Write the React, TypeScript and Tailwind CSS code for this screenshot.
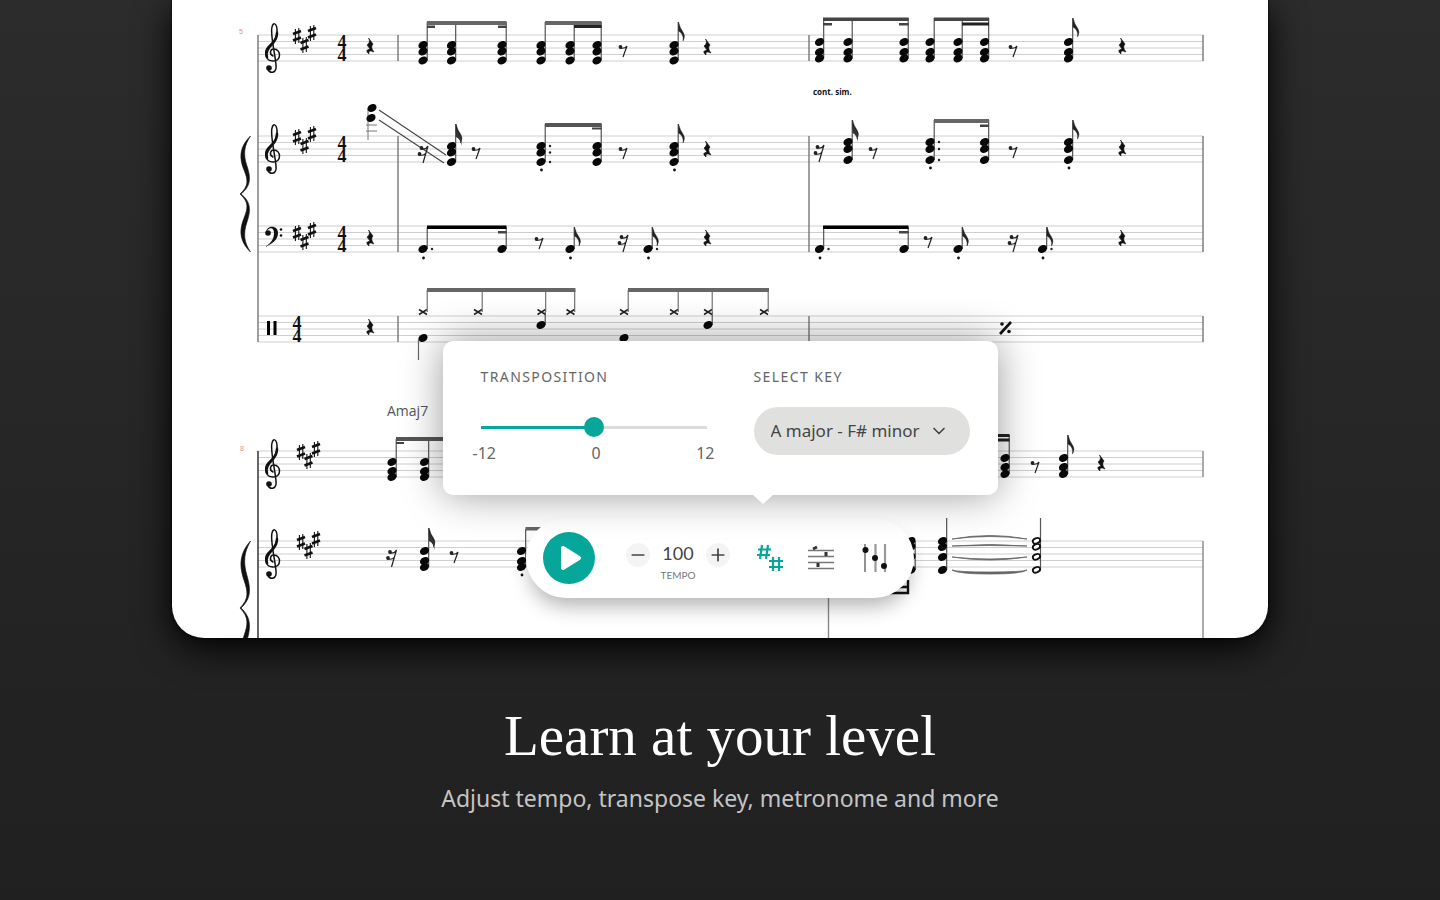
import React, { useState } from 'react';
import { ChevronDown, Minus, Plus } from 'lucide-react';

const KEYS = ['A major - F# minor', 'D major - B minor', 'G major - E minor', 'C major - A minor'];

// Y of the top line of every staff
const STAVES = [35, 136, 226, 316, 451, 541];

type Point = { x: number; y: number };

const Staff = ({ y }: { y: number }) => (
  <path
    d={[0, 6.5, 13, 19.5, 26].map((dy) => `M258 ${y + dy}H1203`).join('')}
    stroke="#cfcfcf"
    strokeWidth="1.1"
  />
);

const TrebleClef = ({ y }: { y: number }) => (
  <g transform={`translate(273 ${y})`} fill="none" stroke="#111" strokeLinecap="round">
    <path
      d="M0 21C-4 19-3 14 1 14C8 14 9 26 0 26C-8 26-9 17-5 12C0 7 5 3 4-6C3-13 0-12-1-8C-3-1 2 18 3 30C4 39-4 39-5 34"
      strokeWidth="1.5"
    />
    <path d="M-6 22C-8 17-5 13-1 9C2 6 4 3 4-2" strokeWidth="2.6" />
    <circle cx="-4" cy="33" r="2.8" fill="#111" stroke="none" />
  </g>
);

const BassClef = ({ y }: { y: number }) => (
  <g transform={`translate(265 ${y})`} fill="#111">
    <circle cx="3" cy="7" r="2.8" />
    <path d="M1 6C2-1 13-1 13 7C13 14 7 18 0 21C6 17 9 13 9 7C9 1 4 1 1 6Z" />
    <circle cx="16" cy="3.5" r="1.3" />
    <circle cx="16" cy="9.5" r="1.3" />
  </g>
);

const Sharp = ({ x, y }: Point) => (
  <g transform={`translate(${x} ${y})`} stroke="#111">
    <path d="M-1.6-7V8M1.8-8V7" strokeWidth="1.1" />
    <path d="M-4-2L4-5M-4 4.5L4 1.5" strokeWidth="2.8" />
  </g>
);

const KeySignature = ({ x, y }: Point) => (
  <>
    <Sharp x={x} y={y} />
    <Sharp x={x + 7.5} y={y + 9} />
    <Sharp x={x + 15} y={y - 3} />
  </>
);

const TimeSignature = ({ x, y }: Point) => (
  <g fill="#111" className="font-['Liberation_Serif',serif] text-[18px] font-bold" textAnchor="middle">
    <text x={x} y={y + 13}>4</text>
    <text x={x} y={y + 26}>4</text>
  </g>
);

const QuarterRest = ({ x, y }: Point) => (
  <g transform={`translate(${x} ${y})`}>
    <path d="M-1.5 3L3 9Q0 12 4 17Q-2 14-1 19Q-6 15 0 14L-3 10Q1 7-1.5 3Z" fill="#111" stroke="#111" strokeWidth=".6" />
  </g>
);

const EighthRest = ({ x, y }: Point) => (
  <g transform={`translate(${x} ${y})`}>
    <circle cx="-2.5" cy="12" r="1.9" fill="#222" />
    <path d="M-3 13Q2 14 4 11L0 22" fill="none" stroke="#222" strokeWidth="1.2" />
  </g>
);

const SixteenthRest = ({ x, y }: Point) => (
  <g transform={`translate(${x} ${y})`}>
    <circle cx="-1.5" cy="12" r="1.9" fill="#222" />
    <circle cx="-3.5" cy="18" r="1.9" fill="#222" />
    <path d="M-2 13Q3 14 5 10L0 27M-4 19Q1 20 3 17" fill="none" stroke="#222" strokeWidth="1.2" />
  </g>
);

const Head = ({ x, y }: Point) => (
  <ellipse cx={x} cy={y} rx="4.8" ry="3.7" transform={`rotate(-28 ${x} ${y})`} fill="#080808" />
);

type ChordProps = {
  x: number;
  heads: number[];
  top: number;
  flags?: number;
  dotted?: boolean;
  staccato?: number;
};

const Chord = ({ x, heads, top, flags = 0, dotted, staccato }: ChordProps) => (
  <g>
    <path d={`M${x + 4.2} ${heads[heads.length - 1]}V${top}`} stroke="#444" strokeWidth="1.1" />
    {heads.map((h) => <Head key={h} x={x} y={h} />)}
    {flags > 0 && (
      <path d={`M${x + 4.5} ${top}Q${x + 6} ${top + 6} ${x + 9} ${top + 10}T${x + 9} ${top + 19}Q${x + 10} ${top + 12} ${x + 4.5} ${top + 9}Z`} fill="#222" stroke="#222" strokeWidth=".4" />
    )}
    {flags > 1 && (
      <path d={`M${x + 4.5} ${top + 5}Q${x + 8} ${top + 10} ${x + 10} ${top + 14}V${top + 22}Q${x + 9} ${top + 15} ${x + 4.5} ${top + 13}Z`} fill="#333" />
    )}
    {dotted && heads.map((h) => <circle key={h} cx={x + 9} cy={h} r="1.2" fill="#222" />)}
    {staccato && <circle cx={x + 0.5} cy={staccato} r="1.4" fill="#111" />}
  </g>
);

const Beam = ({ x1, x2, y, h = 3.5, color = '#444' }: { x1: number; x2: number; y: number; h?: number; color?: string }) => (
  <rect x={x1} y={y} width={x2 - x1} height={h} fill={color} />
);

const Cross = ({ x }: { x: number }) => (
  <g>
    <path d={`M${x - 4} 309.5L${x + 4} 314.5M${x - 4} 314.5L${x + 4} 309.5`} stroke="#222" strokeWidth="1.5" />
    <path d={`M${x + 4.2} 312V290`} stroke="#666" strokeWidth="1.1" />
  </g>
);

const Brace = ({ y, height }: { y: number; height: number }) => (
  <path
    transform={`translate(240 ${y}) scale(1 ${height / 116})`}
    d="M10.5 0C-2 12 0 24 4 34C8 44 9 50 0 58C9 66 8 72 4 82C0 92-2 104 10.5 116C4 106 3 98 7 86C11 74 11 66 1 58C11 50 11 42 7 30C3 18 4 10 10.5 0Z"
    fill="#111"
    stroke="#111"
    strokeWidth=".6"
  />
);

const FirstSystem = () => (
  <g>
    <text x="239" y="34" fill="#e58a8a" className="font-['Liberation_Sans',sans-serif] text-[7px]">5</text>
    <path d="M258 35V342M398 35V61M398 136V252M398 316V342M809 35V61M809 136V252M809 316V342M1203 35V61M1203 136V252M1203 316V342" stroke="#777" strokeWidth="1.4" />
    <TrebleClef y={35} />
    <TrebleClef y={136} />
    <BassClef y={226} />
    <Brace y={136} height={116} />
    <KeySignature x={297} y={36} />
    <KeySignature x={297} y={137} />
    <KeySignature x={297} y={233} />
    <TimeSignature x={342} y={35} />
    <TimeSignature x={342} y={136} />
    <TimeSignature x={342} y={226} />
    <TimeSignature x={297} y={316} />
    <path d="M268.5 321V335M275 321V335" stroke="#000" strokeWidth="3" />

    {/* guitar */}
    <QuarterRest x={370} y={35} />
    {[423, 451.5, 502, 541, 570, 597].map((x) => <Chord key={x} x={x} heads={[45, 51.5, 60.5]} top={22} />)}
    <Beam x1={427} x2={506.5} y={21} h={4} color="#666" />
    <Beam x1={427} x2={435} y={25.5} h={2.5} />
    <Beam x1={498} x2={506.5} y={25.5} h={2.5} />
    <Beam x1={545} x2={601.5} y={21} h={4} color="#666" />
    <Beam x1={574} x2={601.5} y={25} h={3} color="#222" />
    <EighthRest x={623} y={35} />
    <Chord x={674} heads={[45, 51.5, 60.5]} top={22} flags={1} />
    <QuarterRest x={707} y={36} />
    {[819.5, 848, 904, 930, 958, 984.5].map((x) => <Chord key={x} x={x} heads={[42, 52, 58.5]} top={18} />)}
    <Beam x1={823} x2={908.5} y={17.5} />
    <Beam x1={823} x2={832} y={23} h={2.5} />
    <Beam x1={899} x2={908.5} y={23} h={2.5} />
    <Beam x1={934} x2={989} y={17.5} />
    <Beam x1={962} x2={989} y={22.5} h={3} color="#222" />
    <EighthRest x={1013} y={35} />
    <Chord x={1068.5} heads={[42, 52, 58.5]} top={18} flags={1} />
    <QuarterRest x={1122} y={35} />
    <text x="813" y="95" fill="#111" className="font-['Open_Sans',sans-serif] text-[8px] font-bold">cont. sim.</text>

    {/* piano, right hand */}
    <path d="M368 109V140M366 125H377M366 131H377" stroke="#777" />
    <Head x={372} y={108} />
    <Head x={371} y={118} />
    <path d="M379 110L446 155M379 120L444 163" stroke="#444" strokeWidth="1.1" />
    <SixteenthRest x={423} y={136} />
    <Chord x={451.5} heads={[146, 152.5, 162]} top={124} flags={2} />
    <EighthRest x={476} y={137} />
    <Chord x={541} heads={[146, 152.5, 162]} top={124} dotted staccato={170} />
    <Chord x={597} heads={[146, 152.5, 162]} top={124} />
    <Beam x1={545} x2={601.5} y={123} h={4} color="#555" />
    <Beam x1={592} x2={601.5} y={127.5} h={2} />
    <EighthRest x={623} y={137} />
    <Chord x={674} heads={[146, 152.5, 162]} top={124} flags={1} staccato={170} />
    <QuarterRest x={707} y={138} />
    <SixteenthRest x={819} y={135} />
    <Chord x={848} heads={[142, 149, 160]} top={120} flags={2} />
    <EighthRest x={873} y={137} />
    <Chord x={930} heads={[142, 149, 160]} top={120} dotted staccato={168} />
    <Chord x={984.5} heads={[142, 149, 160]} top={120} />
    <Beam x1={934} x2={989} y={119} h={4} color="#666" />
    <Beam x1={980} x2={989} y={124.5} h={2.5} />
    <EighthRest x={1013} y={136} />
    <Chord x={1068.5} heads={[142, 149, 160]} top={120} flags={1} staccato={168} />
    <QuarterRest x={1122} y={137} />

    {/* piano, left hand */}
    <QuarterRest x={370} y={227} />
    <Chord x={423} heads={[249]} top={227} dotted staccato={258} />
    <Chord x={502} heads={[249]} top={227} />
    <Beam x1={427} x2={506.5} y={225.5} color="#000" />
    <Beam x1={498} x2={506.5} y={231} h={2.5} />
    <EighthRest x={539} y={227} />
    <Chord x={570} heads={[249]} top={227} flags={1} staccato={258} />
    <SixteenthRest x={623} y={225} />
    <Chord x={648} heads={[249]} top={227} flags={1} dotted staccato={258} />
    <QuarterRest x={707} y={227} />
    <Chord x={819.5} heads={[249]} top={227} dotted staccato={258} />
    <Chord x={904} heads={[249]} top={227} />
    <Beam x1={823} x2={908.5} y={225.5} color="#000" />
    <Beam x1={899} x2={908.5} y={231} h={2.5} />
    <EighthRest x={928} y={226} />
    <Chord x={958} heads={[249]} top={227} flags={1} staccato={258} />
    <SixteenthRest x={1013} y={225} />
    <Chord x={1042.5} heads={[249]} top={227} flags={1} dotted staccato={258} />
    <QuarterRest x={1122} y={227} />

    {/* drums */}
    <QuarterRest x={370} y={316} />
    {[423, 478, 541.5, 570.5, 624, 674, 708, 764].map((x) => <Cross key={x} x={x} />)}
    <Beam x1={427} x2={575.5} y={288} h={4} color="#666" />
    <Beam x1={628} x2={769} y={288} h={4} color="#666" />
    <Chord x={541} heads={[325]} top={312} />
    <Chord x={708} heads={[325]} top={312} />
    <Head x={423} y={338} />
    <Head x={624} y={338} />
    <path d="M418.5 339V360" stroke="#666" strokeWidth="1.2" />
    <path d="M1000 334L1011 322" stroke="#111" strokeWidth="2.6" />
    <circle cx="1002" cy="324" r="1.8" fill="#111" />
    <circle cx="1009" cy="331.5" r="1.8" fill="#111" />
  </g>
);

const SecondSystem = () => (
  <g>
    <text x="240" y="451" fill="#e58a8a" className="font-['Liberation_Sans',sans-serif] text-[7px]">8</text>
    <text x="387" y="416" fill="#555" className="font-['Open_Sans',sans-serif] text-[14px]">Amaj7</text>
    <path d="M258 451V640" stroke="#555" strokeWidth="1.8" />
    <path d="M828.5 541V640M1203 451V477M1203 541V640" stroke="#888" strokeWidth="1.4" />
    <TrebleClef y={451} />
    <TrebleClef y={541} />
    <Brace y={541} height={134} />
    <KeySignature x={301} y={452} />
    <KeySignature x={301} y={542} />

    <Chord x={392} heads={[462, 471, 477]} top={439} />
    <Chord x={424.5} heads={[462, 471, 477]} top={439} />
    <Beam x1={396} x2={480} y={437} h={4} color="#555" />
    <Beam x1={396} x2={404} y={442} h={2} />
    <Chord x={1005} heads={[458, 467, 474]} top={435} />
    <Beam x1={980} x2={1009.5} y={434} h={3} color="#222" />
    <Beam x1={980} x2={1009.5} y={438.5} h={3} color="#222" />
    <EighthRest x={1035} y={451} />
    <Chord x={1063.5} heads={[458, 467, 474]} top={435} flags={1} />
    <QuarterRest x={1101} y={452} />

    <SixteenthRest x={391.5} y={540} />
    <Chord x={424.5} heads={[551, 561, 567]} top={528} flags={2} />
    <EighthRest x={454} y={541} />
    <Chord x={521.5} heads={[551, 561, 567]} top={529} staccato={575} />
    <Beam x1={525.5} x2={560} y={527} color="#666" />
    <Chord x={911} heads={[541, 547, 557, 570]} top={541} />
    <path d="M908 580V593H880M908 587H896" fill="none" stroke="#111" strokeWidth="2.4" />
    <Chord x={942.5} heads={[541, 547, 557, 570]} top={518} />
    <path d="M1040.5 518V570" stroke="#555" strokeWidth="1.2" />
    {[541, 547, 557, 570].map((y) => (
      <ellipse key={y} cx="1036.5" cy={y} rx="3.8" ry="2.6" transform={`rotate(-24 1036 ${y})`} fill="#fff" stroke="#111" strokeWidth="1.8" />
    ))}
    <path
      d="M952 539Q990 532 1027 539Q990 534 952 539ZM952 546Q990 543 1027 546Q990 545 952 546ZM952 557Q990 561 1027 557Q990 563 952 557ZM952 570Q957 572 990 572T1027 570Q1022 574 990 574T952 570Z"
      fill="#666"
      stroke="#666"
      strokeWidth=".8"
    />
  </g>
);

const Score = () => (
  <svg viewBox="172 0 1096 638" className="block h-auto w-full" role="img" aria-label="Sheet music">
    {STAVES.map((y) => <Staff key={y} y={y} />)}
    <FirstSystem />
    <SecondSystem />
  </svg>
);

const TransposePopover = () => {
  const [semitones, setSemitones] = useState(0);
  const [key, setKey] = useState(KEYS[0]);
  const filled = ((semitones + 12) / 24) * 100;

  return (
    <div className="relative z-10 flex gap-[47px] rounded-[10px] bg-white pt-7 pr-7 pb-8 pl-[38px] text-[#666] shadow-[0_0_40px_rgba(0,0,0,0.4)]">
      <div className="w-[226px]">
        <label htmlFor="transposition" className="block text-sm leading-4 tracking-widest">TRANSPOSITION</label>
        <input
          id="transposition"
          type="range"
          min={-12}
          max={12}
          value={semitones}
          onChange={(e) => setSemitones(Number(e.target.value))}
          style={{ backgroundImage: `linear-gradient(to right, #06a69a ${filled}%, #dcdcdc ${filled}%)` }}
          className="mt-8 block h-5 w-full cursor-pointer appearance-none bg-[length:100%_3px] bg-center bg-no-repeat [&::-webkit-slider-thumb]:h-5 [&::-webkit-slider-thumb]:w-5 [&::-webkit-slider-thumb]:appearance-none [&::-webkit-slider-thumb]:rounded-full [&::-webkit-slider-thumb]:bg-[#06a69a]"
        />
        <div className="-mx-2 mt-1.5 flex justify-between text-base leading-5">
          <span>-12</span>
          <span>0</span>
          <span>12</span>
        </div>
      </div>
      <div className="w-[216px]">
        <label htmlFor="key" className="block text-sm leading-4 tracking-widest">SELECT KEY</label>
        <div className="relative mt-[22px]">
          <select
            id="key"
            value={key}
            onChange={(e) => setKey(e.target.value)}
            className="h-12 w-full appearance-none rounded-full bg-[#e0e1df] pr-10 pl-[17px] text-[17px] text-[#444]"
          >
            {KEYS.map((k) => <option key={k}>{k}</option>)}
          </select>
          <ChevronDown className="pointer-events-none absolute top-3.5 right-[21px] h-5 w-5 text-[#444]" />
        </div>
      </div>
      <svg viewBox="0 0 20 9" className="absolute top-full left-[310px] h-[9px] w-5">
        <path d="M0 0H20L10 9Z" fill="#fff" />
      </svg>
    </div>
  );
};

const PlayerBar = () => {
  const [tempo, setTempo] = useState(100);

  return (
    <div className="flex h-20 items-center rounded-full bg-white pr-6 pl-[17px] shadow-[0_12px_20px_-4px_rgba(0,0,0,0.3)]">
      <button aria-label="Play" className="flex h-[52px] w-[52px] items-center justify-center rounded-full bg-[#06a69a]">
        <svg viewBox="0 0 52 52" className="h-full w-full">
          <path d="M20 16L36 26L20 36Z" fill="#fff" stroke="#fff" strokeWidth="4" strokeLinejoin="round" />
        </svg>
      </button>
      <div className="ml-[31px] flex items-start pt-2 text-[#444]">
        <button aria-label="Slower" onClick={() => setTempo(tempo - 1)} className="flex h-6 w-6 items-center justify-center rounded-full bg-[#f4f4f4]">
          <Minus className="h-5 w-5" />
        </button>
        <div className="w-14 text-center font-[Lato,sans-serif]">
          <div className="text-lg leading-5">{tempo}</div>
          <div className="mt-1.5 text-[10px] leading-3 text-[#777]">TEMPO</div>
        </div>
        <button aria-label="Faster" onClick={() => setTempo(tempo + 1)} className="flex h-6 w-6 items-center justify-center rounded-full bg-[#f4f4f4]">
          <Plus className="h-5 w-5" />
        </button>
      </div>
      <div className="ml-6 flex gap-5">
        <button aria-label="Transpose" className="h-8 w-8">
          <svg viewBox="0 0 32 32" className="h-full w-full" fill="none" stroke="#06a69a" strokeWidth="2.2">
            <path d="M8 3L6 17M14 3L12 17M4 7.5H17M3 13H16" />
            <path d="M19 15V29M25 15V29M15 19H29M15 25H29" />
          </svg>
        </button>
        <button aria-label="Score layout" className="h-8 w-8">
          <svg viewBox="0 0 32 32" className="h-full w-full" fill="none" stroke="#777" strokeWidth="1.5">
            <path d="M2 8.5H28M2 14.5H28M2 20.5H28M2 26.5H28" />
            <path d="M7 7L11 5M20 10V14M12 21V25" stroke="#333" strokeWidth="3" />
          </svg>
        </button>
        <button aria-label="Mixer" className="h-8 w-8">
          <svg viewBox="0 0 32 32" className="h-full w-full">
            <path d="M7 2V30" stroke="#777" strokeWidth="1.6" />
            <path d="M17.5 2V30M27 2V30" stroke="#999" strokeWidth="2.2" />
            <circle cx="7.5" cy="8" r="3" fill="#111" />
            <circle cx="17" cy="16" r="3" fill="#111" />
            <circle cx="26" cy="24" r="3" fill="#111" />
          </svg>
        </button>
      </div>
    </div>
  );
};

const App = () => {
  return (
    <main className="flex min-h-screen flex-col items-center bg-linear-to-b from-[#2c2c2c] to-[#202021] font-['Noto_Sans',sans-serif]">
      <section className="relative w-full max-w-[1096px] rounded-b-[32px] bg-white shadow-[0_0_3px_#000,0_10px_36px_#000]">
        <div className="overflow-hidden rounded-b-[32px]">
          <Score />
        </div>
        {/* Controls floating over the score */}
        <div className="absolute inset-x-0 bottom-10 flex flex-col items-center gap-[23px]">
          <TransposePopover />
          <PlayerBar />
        </div>
      </section>

      <h1 className="mt-[66px] font-['Liberation_Serif',serif] text-[57px] leading-[64px] text-white">Learn at your level</h1>
      <p className="mt-3.5 mb-8 text-[23px] leading-8 text-[#c4c4c4]">Adjust tempo, transpose key, metronome and more</p>
    </main>
  );
};

export default App;
